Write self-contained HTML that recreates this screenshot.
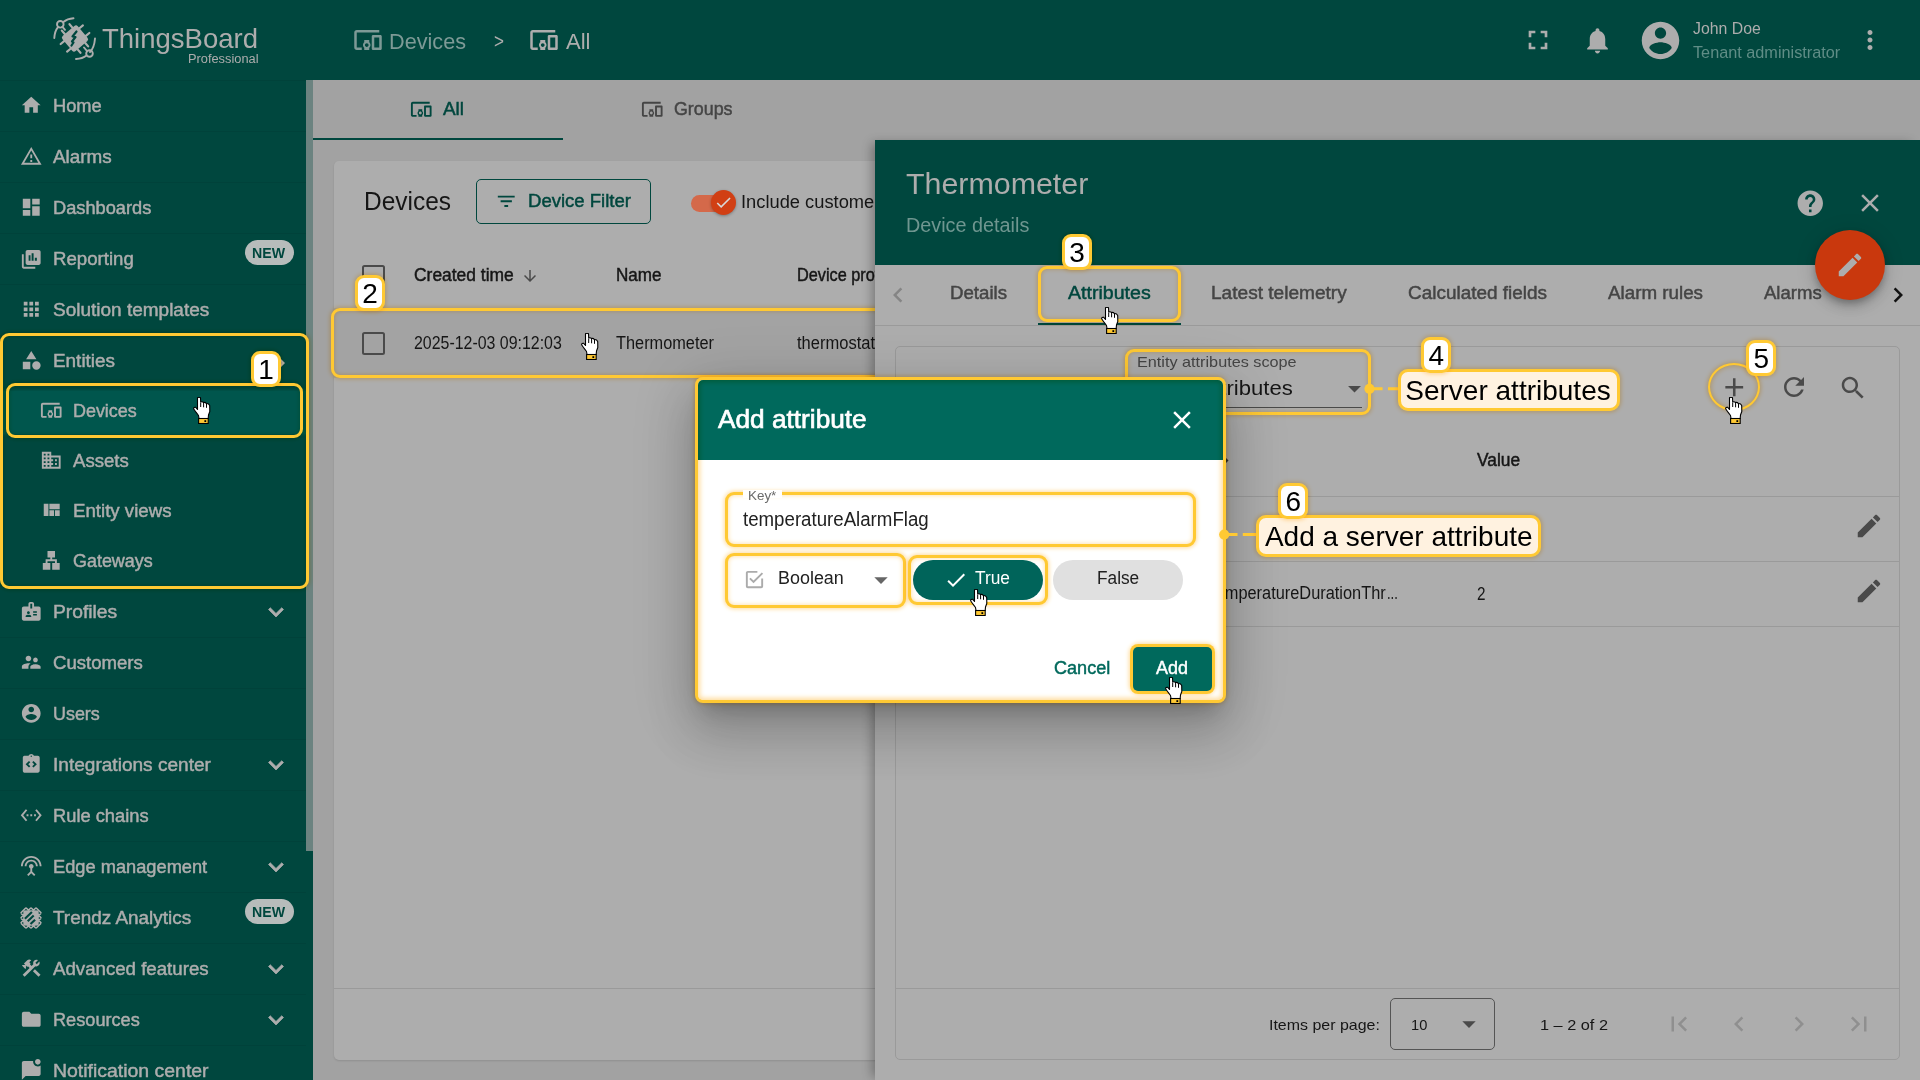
<!DOCTYPE html><html><head><meta charset="utf-8"><title>ThingsBoard</title><style>
html,body{margin:0;padding:0;}
body{width:1920px;height:1080px;overflow:hidden;position:relative;background:#a2a2a2;font-family:"Liberation Sans", sans-serif;}
#root{position:absolute;left:0;top:0;width:1920px;height:1080px;overflow:hidden;}
#root div,#root svg,#root span{position:absolute;box-sizing:border-box;}
.t{white-space:nowrap;display:block;}
.y{border:3px solid #ffc933;border-radius:9px;}
.g{border-radius:9px;box-shadow:0 0 4px 1px #ffdc9c,inset 0 0 5px 3px #ffdc9c;mix-blend-mode:multiply;}
.go{border-radius:9px;box-shadow:0 0 4px 1px #ffdc9c;mix-blend-mode:multiply;}
.nl{border:3px solid #ffc933;border-radius:9px;background:#fff;}
.tl{border:3px solid #ffc933;border-radius:10px;background:#fff2e0;}
</style></head><body><div id="root">
<div  style="left:0px;top:0px;width:1920px;height:80px;background:#00473e;"></div>
<div  style="left:0px;top:80px;width:313px;height:1000px;background:#00473e;"></div>
<div  style="left:306px;top:80px;width:7px;height:771px;background:#6b8380;"></div>
<div  style="left:0px;top:80.0px;width:306px;height:1px;background:#00423a;"></div>
<svg style="left:20.00px;top:94.25px;width:22.5px;height:22.5px;" viewBox="0 0 24 24"><path fill="#adadad"  d="M10 20v-6h4v6h5v-8h3L12 3 2 12h3v8z"/></svg>
<span class="t" id="t0" style="font-size:17.5px;line-height:17.5px;height:17.5px;color:#adadad;top:97.64px;-webkit-text-stroke:0.45px #adadad;left:52.5px;transform-origin:0 0;transform:scaleX(1.0442);">Home</span>
<div  style="left:0px;top:131.0px;width:306px;height:1px;background:#00423a;"></div>
<svg style="left:20.00px;top:145.25px;width:22.5px;height:22.5px;" viewBox="0 0 24 24"><path fill="#adadad"  d="M12 5.99L19.53 19H4.47L12 5.99M12 2L1 21h22L12 2zm1 14h-2v2h2v-2zm0-6h-2v4h2v-4z"/></svg>
<span class="t" id="t1" style="font-size:17.5px;line-height:17.5px;height:17.5px;color:#adadad;top:148.64px;-webkit-text-stroke:0.45px #adadad;left:52.5px;transform-origin:0 0;transform:scaleX(1.0789);">Alarms</span>
<div  style="left:0px;top:182.0px;width:306px;height:1px;background:#00423a;"></div>
<svg style="left:20.00px;top:196.25px;width:22.5px;height:22.5px;" viewBox="0 0 24 24"><path fill="#adadad"  d="M3 13h8V3H3v10zm0 8h8v-6H3v6zm10 0h8V11h-8v10zm0-18v6h8V3h-8z"/></svg>
<span class="t" id="t2" style="font-size:17.5px;line-height:17.5px;height:17.5px;color:#adadad;top:199.64px;-webkit-text-stroke:0.45px #adadad;left:52.5px;transform-origin:0 0;transform:scaleX(1.0411);">Dashboards</span>
<div  style="left:0px;top:233.0px;width:306px;height:1px;background:#00423a;"></div>
<svg style="left:20px;top:248.1px;width:22.5px;height:22.5px" viewBox="0 0 24 24"><path fill="#adadad" fill-rule="evenodd" d="M4 6.700H2V20c0 1.100.9 2 2 2h12.300v-2H4zM20 2H8c-1.100 0-2 .9-2 2v12c0 1.100.9 2 2 2h12c1.100 0 2-.9 2-2V4c0-1.100-.9-2-2-2zM9.200 7.700h2v5.900h-2zM12.400 5.600h2.100v8h-2.100zM15.800 10.300h2.200v3.300h-2.200z"/></svg>
<span class="t" id="t3" style="font-size:17.5px;line-height:17.5px;height:17.5px;color:#adadad;top:250.64px;-webkit-text-stroke:0.45px #adadad;left:52.5px;transform-origin:0 0;transform:scaleX(1.0640);">Reporting</span>
<div  style="left:244.5px;top:239.5px;width:49px;height:25px;background:#b7bcbb;border-radius:12.5px;"></div>
<span class="t" id="t4" style="font-size:15px;line-height:15px;height:15px;color:#00473e;top:245.20px;font-weight:700;left:252.3px;transform-origin:0 0;transform:scaleX(0.9429);">NEW</span>
<div  style="left:0px;top:284.0px;width:306px;height:1px;background:#00423a;"></div>
<svg style="left:20.00px;top:298.25px;width:22.5px;height:22.5px;" viewBox="0 0 24 24"><path fill="#adadad"  d="M4 8h4V4H4v4zm6 12h4v-4h-4v4zm-6 0h4v-4H4v4zm0-6h4v-4H4v4zm6 0h4v-4h-4v4zm6-10v4h4V4h-4zm-6 4h4V4h-4v4zm6 6h4v-4h-4v4zm0 6h4v-4h-4v4z"/></svg>
<span class="t" id="t5" style="font-size:17.5px;line-height:17.5px;height:17.5px;color:#adadad;top:301.64px;-webkit-text-stroke:0.45px #adadad;left:52.5px;transform-origin:0 0;transform:scaleX(1.0852);">Solution templates</span>
<div  style="left:0px;top:335.0px;width:306px;height:1px;background:#00423a;"></div>
<svg style="left:20.00px;top:349.25px;width:22.5px;height:22.5px;" viewBox="0 0 24 24"><path fill="#adadad"  d="M12 2l-5.5 9h11z M13 17.5a4.5 4.5 0 1 0 9 0a4.5 4.5 0 1 0 -9 0z M3 13.5h8v8H3z"/></svg>
<span class="t" id="t6" style="font-size:17.5px;line-height:17.5px;height:17.5px;color:#adadad;top:352.64px;-webkit-text-stroke:0.45px #adadad;left:52.5px;transform-origin:0 0;transform:scaleX(1.0803);">Entities</span>
<svg style="left:265.00px;top:347.90px;width:30px;height:30px;" viewBox="0 0 24 24"><path fill="#adadad"  d="M10 6L8.59 7.41 13.17 12l-4.58 4.59L10 18l6-6z"/></svg>
<div  style="left:0px;top:586.0px;width:306px;height:1px;background:#00423a;"></div>
<svg style="left:20.00px;top:600.25px;width:22.5px;height:22.5px;" viewBox="0 0 24 24"><path fill="#adadad"  d="M20 7h-5V4c0-1.1-.9-2-2-2h-2c-1.1 0-2 .9-2 2v3H4c-1.1 0-2 .9-2 2v11c0 1.1.9 2 2 2h16c1.1 0 2-.9 2-2V9c0-1.1-.9-2-2-2zM9 12c.83 0 1.5.67 1.5 1.5S9.83 15 9 15s-1.5-.67-1.5-1.5S8.17 12 9 12zm3 6H6v-.75c0-1 2-1.5 3-1.5s3 .5 3 1.5V18zm1-9h-2V4h2v5zm5 7.5h-4V15h4v1.5zm0-3h-4V12h4v1.5z"/></svg>
<span class="t" id="t7" style="font-size:17.5px;line-height:17.5px;height:17.5px;color:#adadad;top:603.64px;-webkit-text-stroke:0.45px #adadad;left:52.5px;transform-origin:0 0;transform:scaleX(1.1001);">Profiles</span>
<svg style="left:260.80px;top:597.00px;width:30px;height:30px;overflow:visible;" viewBox="0 0 24 24"><path fill="#adadad" stroke="#adadad" stroke-width="0.55" d="M16.59 8.59L12 13.17 7.41 8.59 6 10l6 6 6-6z"/></svg>
<div  style="left:0px;top:637.0px;width:306px;height:1px;background:#00423a;"></div>
<svg style="left:20.00px;top:651.25px;width:22.5px;height:22.5px;" viewBox="0 0 24 24"><path fill="#adadad"  d="M16.5 12c1.38 0 2.49-1.12 2.49-2.5S17.88 7 16.5 7C15.12 7 14 8.12 14 9.5s1.12 2.5 2.5 2.5zM9 11c1.66 0 2.99-1.34 2.99-3S10.66 5 9 5C7.34 5 6 6.34 6 8s1.34 3 3 3zm7.5 3c-1.83 0-5.5.92-5.5 2.75V19h11v-2.25c0-1.83-3.67-2.75-5.5-2.75zM9 13c-2.33 0-7 1.17-7 3.5V19h7v-2.25c0-.85.33-2.34 2.37-3.47C10.5 13.1 9.66 13 9 13z"/></svg>
<span class="t" id="t8" style="font-size:17.5px;line-height:17.5px;height:17.5px;color:#adadad;top:654.64px;-webkit-text-stroke:0.45px #adadad;left:52.5px;transform-origin:0 0;transform:scaleX(1.0613);">Customers</span>
<div  style="left:0px;top:688.0px;width:306px;height:1px;background:#00423a;"></div>
<svg style="left:20.00px;top:702.25px;width:22.5px;height:22.5px;" viewBox="0 0 24 24"><path fill="#adadad"  d="M12 2C6.48 2 2 6.48 2 12s4.48 10 10 10 10-4.48 10-10S17.52 2 12 2zm0 3c1.66 0 3 1.34 3 3s-1.34 3-3 3-3-1.34-3-3 1.34-3 3-3zm0 14.2c-2.5 0-4.71-1.28-6-3.22.03-1.99 4-3.08 6-3.08 1.99 0 5.97 1.09 6 3.08-1.29 1.94-3.5 3.22-6 3.22z"/></svg>
<span class="t" id="t9" style="font-size:17.5px;line-height:17.5px;height:17.5px;color:#adadad;top:705.64px;-webkit-text-stroke:0.45px #adadad;left:52.5px;transform-origin:0 0;transform:scaleX(1.0240);">Users</span>
<div  style="left:0px;top:739.0px;width:306px;height:1px;background:#00423a;"></div>
<svg style="left:20.00px;top:753.25px;width:22.5px;height:22.5px;" viewBox="0 0 24 24"><path fill="#adadad"  d="M19 3h-4.18C14.4 1.84 13.3 1 12 1s-2.4.84-2.82 2H5c-.14 0-.27.01-.4.04-.39.08-.74.28-1.01.55-.18.18-.33.4-.43.64-.1.23-.16.49-.16.77v14c0 .27.06.54.16.78s.25.45.43.64c.27.27.62.47 1.01.55.13.02.26.03.4.03h14c1.1 0 2-.9 2-2V5c0-1.1-.9-2-2-2zm-8 11.17l-1.41 1.42L6 12l3.59-3.59L11 9.83 8.83 12 11 14.17zm1-9.92c-.41 0-.75-.34-.75-.75s.34-.75.75-.75.75.34.75.75-.34.75-.75.75zm2.41 11.34L13 14.17 15.17 12 13 9.83l1.41-1.42L18 12l-3.59 3.59z"/></svg>
<span class="t" id="t10" style="font-size:17.5px;line-height:17.5px;height:17.5px;color:#adadad;top:756.64px;-webkit-text-stroke:0.45px #adadad;left:52.5px;transform-origin:0 0;transform:scaleX(1.0893);">Integrations center</span>
<svg style="left:260.80px;top:750.00px;width:30px;height:30px;overflow:visible;" viewBox="0 0 24 24"><path fill="#adadad" stroke="#adadad" stroke-width="0.55" d="M16.59 8.59L12 13.17 7.41 8.59 6 10l6 6 6-6z"/></svg>
<div  style="left:0px;top:790.0px;width:306px;height:1px;background:#00423a;"></div>
<svg style="left:20.00px;top:804.25px;width:22.5px;height:22.5px;" viewBox="0 0 24 24"><path fill="#adadad"  d="M7.77 6.76L6.23 5.48.82 12l5.41 6.52 1.54-1.28L3.42 12l4.35-5.24zM7 13h2v-2H7v2zm10-2h-2v2h2v-2zm-6 2h2v-2h-2v2zm6.77-7.52l-1.54 1.28L20.58 12l-4.35 5.24 1.54 1.28L23.18 12l-5.41-6.52z"/></svg>
<span class="t" id="t11" style="font-size:17.5px;line-height:17.5px;height:17.5px;color:#adadad;top:807.64px;-webkit-text-stroke:0.45px #adadad;left:52.5px;transform-origin:0 0;transform:scaleX(1.0453);">Rule chains</span>
<div  style="left:0px;top:841.0px;width:306px;height:1px;background:#00423a;"></div>
<svg style="left:20.00px;top:855.25px;width:22.5px;height:22.5px;" viewBox="0 0 24 24"><path fill="#adadad"  d="M12 5c-3.87 0-7 3.13-7 7h2c0-2.76 2.24-5 5-5s5 2.24 5 5h2c0-3.87-3.13-7-7-7zm1 9.29c.88-.39 1.5-1.26 1.5-2.29 0-1.38-1.12-2.5-2.5-2.5S9.5 10.62 9.5 12c0 1.02.62 1.9 1.5 2.29v3.3L7.59 21 9 22.41l3-3 3 3L16.41 21 13 17.59v-3.3zM12 1C5.93 1 1 5.93 1 12h2c0-4.97 4.03-9 9-9s9 4.03 9 9h2c0-6.07-4.93-11-11-11z"/></svg>
<span class="t" id="t12" style="font-size:17.5px;line-height:17.5px;height:17.5px;color:#adadad;top:858.64px;-webkit-text-stroke:0.45px #adadad;left:52.5px;transform-origin:0 0;transform:scaleX(1.0427);">Edge management</span>
<svg style="left:260.80px;top:852.00px;width:30px;height:30px;overflow:visible;" viewBox="0 0 24 24"><path fill="#adadad" stroke="#adadad" stroke-width="0.55" d="M16.59 8.59L12 13.17 7.41 8.59 6 10l6 6 6-6z"/></svg>
<div  style="left:0px;top:892.0px;width:306px;height:1px;background:#00423a;"></div>
<svg style="left:20px;top:907.0px;width:22px;height:22px" viewBox="0 0 22 22"><path d="M6.0 .7L.7 6.0M11.0 .7L.7 11.0M16.0 .7L.7 16.0M21.3 6.0L6.0 21.3M21.3 11.0L11.0 21.3M21.3 16.0L16.0 21.3M6.0 .7L21.3 16.0M11.0 .7L21.3 11.0M16.0 .7L21.3 6.0M.7 6.0L16.0 21.3M.7 11.0L11.0 21.3M.7 16.0L6.0 21.3" stroke="#adadad" stroke-width="1.600" fill="none"/><path d="M3.400 3.400L8.500 3.200L13.500 3.200L18.600 3.400L18.800 8.500L18.800 13.500L18.600 18.600L13.500 18.800L8.500 18.800L3.400 18.600L3.200 13.500L3.200 8.500z" fill="#adadad"/><path d="M4.900 11.700L11.900 4.900M7.700 14.300L13.700 8.400M10.500 17.100L15.100 12.700" stroke="#00473e" stroke-width="2.100" fill="none"/></svg>
<span class="t" id="t13" style="font-size:17.5px;line-height:17.5px;height:17.5px;color:#adadad;top:909.64px;-webkit-text-stroke:0.45px #adadad;left:52.5px;transform-origin:0 0;transform:scaleX(1.0818);">Trendz Analytics</span>
<div  style="left:244.5px;top:898.5px;width:49px;height:25px;background:#b7bcbb;border-radius:12.5px;"></div>
<span class="t" id="t14" style="font-size:15px;line-height:15px;height:15px;color:#00473e;top:904.20px;font-weight:700;left:252.3px;transform-origin:0 0;transform:scaleX(0.9429);">NEW</span>
<div  style="left:0px;top:943.0px;width:306px;height:1px;background:#00423a;"></div>
<svg style="left:20.00px;top:957.25px;width:22.5px;height:22.5px;" viewBox="0 0 24 24"><path fill="#adadad"  d="M13.783 15.172l2.121-2.121 5.996 5.996-2.121 2.121zM17.5 10c1.93 0 3.5-1.57 3.5-3.5 0-.58-.16-1.12-.41-1.6l-2.7 2.7-1.49-1.49 2.7-2.7c-.48-.25-1.02-.41-1.6-.41C15.57 3 14 4.57 14 6.5c0 .41.08.8.21 1.16l-1.85 1.85-1.78-1.78.71-.71-1.41-1.41L12 3.49c-1.17-1.17-3.07-1.17-4.24 0L4.22 7.03l1.41 1.41H2.81l-.71.71 3.54 3.54.71-.71V9.15l1.41 1.41.71-.71 1.78 1.78-7.41 7.41 2.12 2.12L16.34 9.79c.36.13.75.21 1.16.21z"/></svg>
<span class="t" id="t15" style="font-size:17.5px;line-height:17.5px;height:17.5px;color:#adadad;top:960.64px;-webkit-text-stroke:0.45px #adadad;left:52.5px;transform-origin:0 0;transform:scaleX(1.0662);">Advanced features</span>
<svg style="left:260.80px;top:954.00px;width:30px;height:30px;overflow:visible;" viewBox="0 0 24 24"><path fill="#adadad" stroke="#adadad" stroke-width="0.55" d="M16.59 8.59L12 13.17 7.41 8.59 6 10l6 6 6-6z"/></svg>
<div  style="left:0px;top:994.0px;width:306px;height:1px;background:#00423a;"></div>
<svg style="left:20.00px;top:1008.25px;width:22.5px;height:22.5px;" viewBox="0 0 24 24"><path fill="#adadad"  d="M10 4H4c-1.1 0-1.99.9-1.99 2L2 18c0 1.1.9 2 2 2h16c1.1 0 2-.9 2-2V8c0-1.1-.9-2-2-2h-8l-2-2z"/></svg>
<span class="t" id="t16" style="font-size:17.5px;line-height:17.5px;height:17.5px;color:#adadad;top:1011.64px;-webkit-text-stroke:0.45px #adadad;left:52.5px;transform-origin:0 0;transform:scaleX(1.0376);">Resources</span>
<svg style="left:260.80px;top:1005.00px;width:30px;height:30px;overflow:visible;" viewBox="0 0 24 24"><path fill="#adadad" stroke="#adadad" stroke-width="0.55" d="M16.59 8.59L12 13.17 7.41 8.59 6 10l6 6 6-6z"/></svg>
<div  style="left:0px;top:1045.0px;width:306px;height:1px;background:#00423a;"></div>
<svg style="left:20.00px;top:1059.25px;width:22.5px;height:22.5px;" viewBox="0 0 24 24"><path fill="#adadad"  d="M22 7v9c0 1.1-.9 2-2 2H6l-4 4V4c0-1.1.9-2 2-2h10.1c-.1.32-.1.66-.1 1 0 2.76 2.24 5 5 5 1.13 0 2.16-.37 3-1zm-6-4c0 1.66 1.34 3 3 3s3-1.34 3-3-1.34-3-3-3-3 1.34-3 3z"/></svg>
<span class="t" id="t17" style="font-size:17.5px;line-height:17.5px;height:17.5px;color:#adadad;top:1062.64px;-webkit-text-stroke:0.45px #adadad;left:52.5px;transform-origin:0 0;transform:scaleX(1.1108);">Notification center</span>
<div  style="left:0px;top:390.5px;width:306px;height:43px;background:#00564d;box-shadow:0 0 2px 1px #00564d;"></div>
<svg style="left:40.25px;top:399.25px;width:22.5px;height:22.5px;" viewBox="0 0 24 24"><path fill="#adadad"  d="M3 6h18V4H3c-1.1 0-2 .9-2 2v12c0 1.1.9 2 2 2h4v-2H3V6zm10 6H9v1.78c-.61.55-1 1.33-1 2.22s.39 1.67 1 2.22V20h4v-1.78c.61-.55 1-1.34 1-2.22s-.39-1.67-1-2.22V12zm-2 5.5c-.83 0-1.5-.67-1.5-1.5s.67-1.5 1.5-1.5 1.5.67 1.5 1.5-.67 1.5-1.5 1.5zM22 8h-6c-.5 0-1 .5-1 1v10c0 .5.5 1 1 1h6c.5 0 1-.5 1-1V9c0-.5-.5-1-1-1zm-1 10h-4v-8h4v8z"/></svg>
<span class="t" id="t18" style="font-size:17.5px;line-height:17.5px;height:17.5px;color:#adadad;top:402.79px;-webkit-text-stroke:0.45px #adadad;left:73px;transform-origin:0 0;transform:scaleX(1.0241);">Devices</span>
<svg style="left:40.25px;top:449.25px;width:22.5px;height:22.5px;" viewBox="0 0 24 24"><path fill="#adadad"  d="M12 7V3H2v18h20V7H12zM6 19H4v-2h2v2zm0-4H4v-2h2v2zm0-4H4V9h2v2zm0-4H4V5h2v2zm4 12H8v-2h2v2zm0-4H8v-2h2v2zm0-4H8V9h2v2zm0-4H8V5h2v2zm10 12h-8v-2h2v-2h-2v-2h2v-2h-2V9h8v10zm-2-8h-2v2h2v-2zm0 4h-2v2h2v-2z"/></svg>
<span class="t" id="t19" style="font-size:17.5px;line-height:17.5px;height:17.5px;color:#adadad;top:452.79px;-webkit-text-stroke:0.45px #adadad;left:73px;transform-origin:0 0;transform:scaleX(1.0613);">Assets</span>
<svg style="left:40.25px;top:499.25px;width:22.5px;height:22.5px;" viewBox="0 0 24 24"><path fill="#adadad"  d="M10 18h5v-6h-5v6zm-6 0h5V5H4v13zm12 0h5v-6h-5v6zM10 5v6h11V5H10z"/></svg>
<span class="t" id="t20" style="font-size:17.5px;line-height:17.5px;height:17.5px;color:#adadad;top:502.79px;-webkit-text-stroke:0.45px #adadad;left:73px;transform-origin:0 0;transform:scaleX(1.0661);">Entity views</span>
<svg style="left:40.25px;top:549.25px;width:22.5px;height:22.5px;" viewBox="0 0 24 24"><path fill="#adadad"  d="M13 22h8v-7h-3v-4h-5V9h3V2H8v7h3v2H6v4H3v7h8v-7H8v-2h8v2h-3z"/></svg>
<span class="t" id="t21" style="font-size:17.5px;line-height:17.5px;height:17.5px;color:#adadad;top:552.79px;-webkit-text-stroke:0.45px #adadad;left:73px;transform-origin:0 0;transform:scaleX(1.0243);">Gateways</span>
<svg style="left:52px;top:16px;width:46px;height:46px" viewBox="0 0 46 46">
<g fill="none" stroke="#adadad" stroke-width="1.900" stroke-linecap="round">
<path d="M2.300 22C2.600 17 4 13.500 5.800 11.300"/><path d="M11.300 6C14 3.800 17.500 2.600 21.500 2.300"/>
<circle cx="8.300" cy="8.300" r="3.300"/>
<path d="M43 22.500C42.500 29 40.500 33.500 38 36"/><path d="M34.500 39.500C32 41.500 28.500 42.800 24 43"/>
<circle cx="37.500" cy="37.500" r="3.300"/>
<path d="M10.500 10.800l2.500 3M35 35l-3-3.500"/>
</g>
<g transform="translate(23 22.500) rotate(-40)">
<rect x="-10" y="-10" width="20" height="20" rx="2.500" fill="#adadad"/>
<g stroke="#adadad" stroke-width="2.200" stroke-linecap="round">
<path d="M-5 -10v-4.500M5 -10v-4.500M-5 10v4.500M5 10v4.500M-10 -5h-4.500M-10 5h-4.500M10 -5h4.500M10 5h4.500"/></g>
</g>
<path d="M24.500 15.500l-4 5 3 .5-3.500 4.500 1.500 1-2 3" fill="none" stroke="#00473e" stroke-width="2.200" stroke-linejoin="round" stroke-linecap="round"/>
</svg>
<span class="t" id="t22" style="font-size:28px;line-height:28px;height:28px;color:#adadad;top:24.50px;left:101.9px;transform-origin:0 0;transform:scaleX(0.9826);">ThingsBoard</span>
<span class="t" id="t23" style="font-size:12.5px;line-height:12.5px;height:12.5px;color:#adadad;top:52.87px;left:187.5px;transform-origin:0 0;transform:scaleX(1.0248);">Professional</span>
<svg style="left:352.50px;top:25.20px;width:30px;height:30px;" viewBox="0 0 24 24"><path fill="#7d9a96"  d="M3 6h18V4H3c-1.1 0-2 .9-2 2v12c0 1.1.9 2 2 2h4v-2H3V6zm10 6H9v1.78c-.61.55-1 1.33-1 2.22s.39 1.67 1 2.22V20h4v-1.78c.61-.55 1-1.34 1-2.22s-.39-1.67-1-2.22V12zm-2 5.5c-.83 0-1.5-.67-1.5-1.5s.67-1.5 1.5-1.5 1.5.67 1.5 1.5-.67 1.5-1.5 1.5zM22 8h-6c-.5 0-1 .5-1 1v10c0 .5.5 1 1 1h6c.5 0 1-.5 1-1V9c0-.5-.5-1-1-1zm-1 10h-4v-8h4v8z"/></svg>
<span class="t" id="t24" style="font-size:22.5px;line-height:22.5px;height:22.5px;color:#7d9a96;top:31.15px;left:389px;transform-origin:0 0;transform:scaleX(0.9621);">Devices</span>
<span class="t" id="t25" style="font-size:20px;line-height:20px;height:20px;color:#adadad;top:31.27px;left:494px;transform-origin:0 0;transform:scaleX(0.8556);">&gt;</span>
<svg style="left:528.70px;top:25.20px;width:30px;height:30px;" viewBox="0 0 24 24"><path fill="#adadad"  d="M3 6h18V4H3c-1.1 0-2 .9-2 2v12c0 1.1.9 2 2 2h4v-2H3V6zm10 6H9v1.78c-.61.55-1 1.33-1 2.22s.39 1.67 1 2.22V20h4v-1.78c.61-.55 1-1.34 1-2.22s-.39-1.67-1-2.22V12zm-2 5.5c-.83 0-1.5-.67-1.5-1.5s.67-1.5 1.5-1.5 1.5.67 1.5 1.5-.67 1.5-1.5 1.5zM22 8h-6c-.5 0-1 .5-1 1v10c0 .5.5 1 1 1h6c.5 0 1-.5 1-1V9c0-.5-.5-1-1-1zm-1 10h-4v-8h4v8z"/></svg>
<span class="t" id="t26" style="font-size:22.5px;line-height:22.5px;height:22.5px;color:#adadad;top:31.15px;left:565.5px;transform-origin:0 0;transform:scaleX(0.9794);">All</span>
<svg style="left:1521.90px;top:24.30px;width:32px;height:32px;" viewBox="0 0 24 24"><path fill="#adadad"  d="M7 14H5v5h5v-2H7v-3zm-2-4h2V7h3V5H5v5zm12 7h-3v2h5v-5h-2v3zM14 5v2h3v3h2V5h-5z"/></svg>
<svg style="left:1581.80px;top:24.90px;width:31px;height:31px;" viewBox="0 0 24 24"><path fill="#adadad"  d="M12 22c1.1 0 2-.9 2-2h-4c0 1.1.89 2 2 2zm6-6v-5c0-3.07-1.64-5.64-4.5-6.32V4c0-.83-.67-1.5-1.5-1.5s-1.5.67-1.5 1.5v.68C7.63 5.36 6 7.92 6 11v5l-2 2v1h16v-1l-2-2z"/></svg>
<svg style="left:1637.50px;top:17.70px;width:45px;height:45px;" viewBox="0 0 24 24"><path fill="#adadad"  d="M12 2C6.48 2 2 6.48 2 12s4.48 10 10 10 10-4.48 10-10S17.52 2 12 2zm0 3c1.66 0 3 1.34 3 3s-1.34 3-3 3-3-1.34-3-3 1.34-3 3-3zm0 14.2c-2.5 0-4.71-1.28-6-3.22.03-1.99 4-3.08 6-3.08 1.99 0 5.97 1.09 6 3.08-1.29 1.94-3.5 3.22-6 3.22z"/></svg>
<span class="t" id="t27" style="font-size:16.25px;line-height:16.25px;height:16.25px;color:#adadad;top:19.74px;left:1692.5px;transform-origin:0 0;transform:scaleX(0.9747);">John Doe</span>
<span class="t" id="t28" style="font-size:16.25px;line-height:16.25px;height:16.25px;color:#5f8d86;top:43.84px;left:1692.5px;transform-origin:0 0;transform:scaleX(0.9998);">Tenant administrator</span>
<svg style="left:1855.00px;top:25.00px;width:30px;height:30px;" viewBox="0 0 24 24"><path fill="#adadad"  d="M12 8c1.1 0 2-.9 2-2s-.9-2-2-2-2 .9-2 2 .9 2 2 2zm0 2c-1.1 0-2 .9-2 2s.9 2 2 2 2-.9 2-2-.9-2-2-2zm0 6c-1.1 0-2 .9-2 2s.9 2 2 2 2-.9 2-2-.9-2-2-2z"/></svg>
<svg style="left:410.25px;top:97.75px;width:22.5px;height:22.5px;" viewBox="0 0 24 24"><path fill="#00473e"  d="M3 6h18V4H3c-1.1 0-2 .9-2 2v12c0 1.1.9 2 2 2h4v-2H3V6zm10 6H9v1.78c-.61.55-1 1.33-1 2.22s.39 1.67 1 2.22V20h4v-1.78c.61-.55 1-1.34 1-2.22s-.39-1.67-1-2.22V12zm-2 5.5c-.83 0-1.5-.67-1.5-1.5s.67-1.5 1.5-1.5 1.5.67 1.5 1.5-.67 1.5-1.5 1.5zM22 8h-6c-.5 0-1 .5-1 1v10c0 .5.5 1 1 1h6c.5 0 1-.5 1-1V9c0-.5-.5-1-1-1zm-1 10h-4v-8h4v8z"/></svg>
<span class="t" id="t29" style="font-size:17.5px;line-height:17.5px;height:17.5px;color:#00473e;top:101.19px;-webkit-text-stroke:0.45px #00473e;left:443px;transform-origin:0 0;transform:scaleX(1.0795);">All</span>
<div  style="left:313px;top:137.5px;width:250px;height:2.5px;background:#00473e;"></div>
<svg style="left:641.25px;top:97.75px;width:22.5px;height:22.5px;" viewBox="0 0 24 24"><path fill="#454545"  d="M3 6h18V4H3c-1.1 0-2 .9-2 2v12c0 1.1.9 2 2 2h4v-2H3V6zm10 6H9v1.78c-.61.55-1 1.33-1 2.22s.39 1.67 1 2.22V20h4v-1.78c.61-.55 1-1.34 1-2.22s-.39-1.67-1-2.22V12zm-2 5.5c-.83 0-1.5-.67-1.5-1.5s.67-1.5 1.5-1.5 1.5.67 1.5 1.5-.67 1.5-1.5 1.5zM22 8h-6c-.5 0-1 .5-1 1v10c0 .5.5 1 1 1h6c.5 0 1-.5 1-1V9c0-.5-.5-1-1-1zm-1 10h-4v-8h4v8z"/></svg>
<span class="t" id="t30" style="font-size:17.5px;line-height:17.5px;height:17.5px;color:#454545;top:101.19px;-webkit-text-stroke:0.45px #454545;left:674px;transform-origin:0 0;transform:scaleX(1.0193);">Groups</span>
<div  style="left:334px;top:161px;width:1565px;height:898.5px;background:#adadad;border-radius:5px;box-shadow:0 1px 2px rgba(0,0,0,.12);"></div>
<span class="t" id="t31" style="font-size:25px;line-height:25px;height:25px;color:#161616;top:189.04px;left:364px;transform-origin:0 0;transform:scaleX(0.9784);">Devices</span>
<div  style="left:476px;top:179px;width:175px;height:44.5px;border:1.250px solid #00473e;border-radius:5px;"></div>
<svg style="left:495.05px;top:190.25px;width:22.5px;height:22.5px;" viewBox="0 0 24 24"><path fill="#00473e"  d="M10 18h4v-2h-4v2zM3 6v2h18V6H3zm3 7h12v-2H6v2z"/></svg>
<span class="t" id="t32" style="font-size:17.5px;line-height:17.5px;height:17.5px;color:#00473e;top:193.49px;-webkit-text-stroke:0.45px #00473e;left:528px;transform-origin:0 0;transform:scaleX(1.0591);">Device Filter</span>
<div  style="left:691px;top:194.5px;width:44px;height:17px;background:#d4694a;border-radius:8.500px;"></div>
<div  style="left:710.5px;top:190px;width:25px;height:25px;background:#d13f14;border-radius:50%;box-shadow:0 1px 3px rgba(0,0,0,.3);"></div>
<svg style="left:713.50px;top:193.20px;width:19px;height:19px;" viewBox="0 0 24 24"><path fill="#d9d9d9"  d="M9 16.17L4.83 12l-1.42 1.41L9 19 21 7l-1.41-1.41z"/></svg>
<span class="t" id="t33" style="font-size:17.5px;line-height:17.5px;height:17.5px;color:#161616;top:194.19px;left:741px;transform-origin:0 0;transform:scaleX(1.0460);">Include customer entities</span>
<div  style="left:362px;top:264.8px;width:22.5px;height:22.5px;border:2.500px solid #4a4a4a;border-radius:2.500px;"></div>
<span class="t" id="t34" style="font-size:17.5px;line-height:17.5px;height:17.5px;color:#161616;top:266.69px;-webkit-text-stroke:0.45px #161616;left:414px;transform-origin:0 0;transform:scaleX(0.9951);">Created time</span>
<svg style="left:520.80px;top:266.50px;width:18px;height:18px;" viewBox="0 0 24 24"><path fill="#4a4a4a"  d="M20 12l-1.41-1.41L13 16.17V4h-2v12.17l-5.58-5.59L4 12l8 8 8-8z"/></svg>
<span class="t" id="t35" style="font-size:17.5px;line-height:17.5px;height:17.5px;color:#161616;top:266.69px;-webkit-text-stroke:0.45px #161616;left:616.3px;transform-origin:0 0;transform:scaleX(0.9746);">Name</span>
<span class="t" id="t36" style="font-size:17.5px;line-height:17.5px;height:17.5px;color:#161616;top:266.69px;-webkit-text-stroke:0.45px #161616;left:796.5px;transform-origin:0 0;transform:scaleX(0.9300);">Device profile</span>
<div  style="left:334px;top:308px;width:1565px;height:70px;background:#a3a3a3;"></div>
<div  style="left:362px;top:332px;width:22.5px;height:22.5px;border:2.500px solid #4a4a4a;border-radius:2.500px;"></div>
<span class="t" id="t37" style="font-size:17.5px;line-height:17.5px;height:17.5px;color:#161616;top:335.19px;left:414px;transform-origin:0 0;transform:scaleX(0.9095);">2025-12-03 09:12:03</span>
<span class="t" id="t38" style="font-size:17.5px;line-height:17.5px;height:17.5px;color:#161616;top:335.19px;left:616.3px;transform-origin:0 0;transform:scaleX(0.9331);">Thermometer</span>
<span class="t" id="t39" style="font-size:17.5px;line-height:17.5px;height:17.5px;color:#161616;top:335.19px;left:796.5px;transform-origin:0 0;transform:scaleX(0.9433);">thermostat</span>
<div  style="left:334px;top:988px;width:1565px;height:1.25px;background:#9a9a9a;"></div>
<div class="g" style="left:0px;top:333px;width:309.2px;height:256px;"></div>
<div class="y" style="left:0px;top:333px;width:309.2px;height:256px;"></div>
<div class="g" style="left:5.8px;top:382.8px;width:297.6px;height:55.5px;"></div>
<div class="y" style="left:5.8px;top:382.8px;width:297.6px;height:55.5px;"></div>
<div class="g" style="left:330.5px;top:307.5px;width:1571px;height:70.5px;"></div>
<div class="y" style="left:330.5px;top:307.5px;width:1571px;height:70.5px;"></div>
<div class="go" style="left:251px;top:351px;width:30px;height:36px;"></div><div class="nl" style="left:251px;top:351px;width:30px;height:36px;"></div>
<span class="t" id="t40" style="font-size:28px;line-height:28px;height:28px;color:#000;top:356.00px;left:258.2px;transform-origin:0 0;transform:scaleX(1.0000);">1</span>
<div class="go" style="left:355px;top:275px;width:30px;height:36px;"></div><div class="nl" style="left:355px;top:275px;width:30px;height:36px;"></div>
<span class="t" id="t41" style="font-size:28px;line-height:28px;height:28px;color:#000;top:280.00px;left:362.2px;transform-origin:0 0;transform:scaleX(1.0000);">2</span>
<svg style="left:192.5px;top:397px;width:18px;height:27px" viewBox="0 0 18 27"><path d="M4.500 .7Q6 -.3 7.500 .7L7.700 5Q9.300 4.200 10.600 5.500Q12.200 5 13.500 6.600Q15.600 6.300 16.700 8.500L16.800 14.500L15.500 18L15.200 21.500H6L5.500 18.500L3 15.200L.6 11.800Q.8 10 2.500 10.200L4.500 12.500Z" fill="#fff" stroke="#000" stroke-width="1.100" stroke-linejoin="round"/><path d="M7.700 5.500V10M10.600 6V10.300M13.500 7V10.800" stroke="#000" stroke-width="1" fill="none"/><rect x="5.600" y="21.500" width="9.600" height="5" fill="#ffc933" stroke="#000" stroke-width="1.100"/><rect x="11.400" y="23.200" width="1.800" height="1.800" fill="#000"/></svg>
<svg style="left:581px;top:332.5px;width:18px;height:27px" viewBox="0 0 18 27"><path d="M4.500 .7Q6 -.3 7.500 .7L7.700 5Q9.300 4.200 10.600 5.500Q12.200 5 13.500 6.600Q15.600 6.300 16.700 8.500L16.800 14.500L15.500 18L15.200 21.500H6L5.500 18.500L3 15.200L.6 11.800Q.8 10 2.500 10.200L4.500 12.500Z" fill="#fff" stroke="#000" stroke-width="1.100" stroke-linejoin="round"/><path d="M7.700 5.500V10M10.600 6V10.300M13.500 7V10.800" stroke="#000" stroke-width="1" fill="none"/><rect x="5.600" y="21.500" width="9.600" height="5" fill="#ffc933" stroke="#000" stroke-width="1.100"/><rect x="11.400" y="23.200" width="1.800" height="1.800" fill="#000"/></svg>
<div  style="left:875px;top:140px;width:1045px;height:940px;background:#adadad;box-shadow:-6px 0 10px -3px rgba(0,0,0,.3);"></div>
<div  style="left:875px;top:140px;width:1045px;height:125px;background:#00473e;"></div>
<span class="t" id="t42" style="font-size:30px;line-height:30px;height:30px;color:#adadad;top:168.60px;left:905.7px;transform-origin:0 0;transform:scaleX(1.0125);">Thermometer</span>
<span class="t" id="t43" style="font-size:20px;line-height:20px;height:20px;color:#6f9690;top:215.47px;left:905.7px;transform-origin:0 0;transform:scaleX(0.9902);">Device details</span>
<svg style="left:1795.15px;top:187.75px;width:30.5px;height:30.5px;" viewBox="0 0 24 24"><path fill="#adadad"  d="M12 2C6.48 2 2 6.48 2 12s4.48 10 10 10 10-4.48 10-10S17.52 2 12 2zm1 17h-2v-2h2v2zm2.07-7.75l-.9.92C13.45 12.9 13 13.5 13 15h-2v-.5c0-1.1.45-2.1 1.17-2.83l1.24-1.26c.37-.36.59-.86.59-1.41 0-1.1-.9-2-2-2s-2 .9-2 2H8c0-2.21 1.79-4 4-4s4 1.79 4 4c0 .88-.36 1.68-.93 2.25z"/></svg>
<svg style="left:1855.00px;top:188.00px;width:30px;height:30px;" viewBox="0 0 24 24"><path fill="#adadad"  d="M19 6.41L17.59 5 12 10.59 6.41 5 5 6.41 10.59 12 5 17.59 6.41 19 12 13.41 17.59 19 19 17.59 13.41 12z"/></svg>
<div  style="left:875px;top:324.5px;width:1045px;height:1.25px;background:#9a9a9a;"></div>
<svg style="left:882.50px;top:280.00px;width:30px;height:30px;" viewBox="0 0 24 24"><path fill="#858585"  d="M15.41 7.41L14 6l-6 6 6 6 1.41-1.41L10.83 12z"/></svg>
<svg style="left:1882.50px;top:280.00px;width:30px;height:30px;" viewBox="0 0 24 24"><path fill="#111"  d="M10 6L8.59 7.41 13.17 12l-4.58 4.59L10 18l6-6z"/></svg>
<span class="t" id="t44" style="font-size:17.5px;line-height:17.5px;height:17.5px;color:#454545;top:285.39px;-webkit-text-stroke:0.45px #454545;left:950px;transform-origin:0 0;transform:scaleX(1.0654);">Details</span>
<span class="t" id="t45" style="font-size:17.5px;line-height:17.5px;height:17.5px;color:#00473e;top:285.39px;-webkit-text-stroke:0.45px #00473e;left:1068px;transform-origin:0 0;transform:scaleX(1.1185);">Attributes</span>
<span class="t" id="t46" style="font-size:17.5px;line-height:17.5px;height:17.5px;color:#454545;top:285.39px;-webkit-text-stroke:0.45px #454545;left:1211px;transform-origin:0 0;transform:scaleX(1.0900);">Latest telemetry</span>
<span class="t" id="t47" style="font-size:17.5px;line-height:17.5px;height:17.5px;color:#454545;top:285.39px;-webkit-text-stroke:0.45px #454545;left:1407.7px;transform-origin:0 0;transform:scaleX(1.0825);">Calculated fields</span>
<span class="t" id="t48" style="font-size:17.5px;line-height:17.5px;height:17.5px;color:#454545;top:285.39px;-webkit-text-stroke:0.45px #454545;left:1607.7px;transform-origin:0 0;transform:scaleX(1.0734);">Alarm rules</span>
<span class="t" id="t49" style="font-size:17.5px;line-height:17.5px;height:17.5px;color:#454545;top:285.39px;-webkit-text-stroke:0.45px #454545;left:1764px;transform-origin:0 0;transform:scaleX(1.0596);">Alarms</span>
<div  style="left:1038px;top:322.5px;width:142.7px;height:2.5px;background:#00473e;"></div>
<div  style="left:1815px;top:229.8px;width:70px;height:70px;background:#c9380d;border-radius:50%;box-shadow:0 4px 6px -1px rgba(0,0,0,.2),0 7px 12px 0 rgba(0,0,0,.14),0 2px 22px 0 rgba(0,0,0,.12);"></div>
<svg style="left:1835.00px;top:249.80px;width:30px;height:30px;" viewBox="0 0 24 24"><path fill="#adadad"  d="M3 17.25V21h3.75L17.81 9.94l-3.75-3.75L3 17.25zM20.71 7.04c.39-.39.39-1.02 0-1.41l-2.34-2.34c-.39-.39-1.02-.39-1.41 0l-1.83 1.83 3.75 3.75 1.83-1.83z"/></svg>
<div  style="left:895.3px;top:346px;width:1004.4px;height:713.5px;border:1.250px solid #9a9a9a;border-radius:5px;"></div>
<span class="t" id="t50" style="font-size:15px;line-height:15px;height:15px;color:#454545;top:354.30px;left:1137px;transform-origin:0 0;transform:scaleX(1.0815);">Entity attributes scope</span>
<span class="t" id="t51" style="font-size:20px;line-height:20px;height:20px;color:#161616;top:378.27px;right:627.3px;transform-origin:100% 0;transform:scaleX(1.1050);">Server attributes</span>
<svg style="left:1339.30px;top:372.80px;width:31px;height:31px;" viewBox="0 0 24 24"><path fill="#4a4a4a"  d="M7 10l5 5 5-5z"/></svg>
<div  style="left:1137px;top:407px;width:224.8px;height:1.3px;background:#4a4a4a;"></div>
<svg style="left:1226px;top:457.500px;width:3px;height:5px" viewBox="0 0 3 5"><path d="M0 0L2.500 2.500L0 5z" fill="#333"/></svg>
<svg style="left:1718.95px;top:371.65px;width:30.5px;height:30.5px;" viewBox="0 0 24 24"><path fill="#4a4a4a"  d="M19 13h-6v6h-2v-6H5v-2h6V5h2v6h6v2z"/></svg>
<svg style="left:1779.00px;top:371.90px;width:30px;height:30px;" viewBox="0 0 24 24"><path fill="#4a4a4a"  d="M17.65 6.35C16.2 4.9 14.21 4 12 4c-4.42 0-7.99 3.58-7.99 8s3.57 8 7.99 8c3.73 0 6.84-2.55 7.73-6h-2.08c-.82 2.33-3.04 4-5.65 4-3.31 0-6-2.69-6-6s2.690-6 6-6c1.66 0 3.14.69 4.22 1.78L13 11h7V4l-2.35 2.35z"/></svg>
<svg style="left:1838.30px;top:372.80px;width:30px;height:30px;" viewBox="0 0 24 24"><path fill="#4a4a4a"  d="M15.5 14h-.79l-.28-.27C15.41 12.59 16 11.11 16 9.5 16 5.91 13.09 3 9.5 3S3 5.91 3 9.5 5.91 16 9.5 16c1.61 0 3.09-.59 4.23-1.57l.27.28v.79l5 4.99L20.49 19l-4.99-5zm-6 0C7.01 14 5 11.99 5 9.5S7.01 5 9.5 5 14 7.01 14 9.5 11.99 14 9.5 14z"/></svg>
<span class="t" id="t52" style="font-size:17.5px;line-height:17.5px;height:17.5px;color:#161616;top:451.89px;-webkit-text-stroke:0.45px #161616;left:1477.3px;transform-origin:0 0;transform:scaleX(0.9915);">Value</span>
<div  style="left:896px;top:496px;width:1003px;height:1.25px;background:#9a9a9a;"></div>
<div  style="left:896px;top:561px;width:1003px;height:1.25px;background:#9a9a9a;"></div>
<div  style="left:896px;top:626px;width:1003px;height:1.25px;background:#9a9a9a;"></div>
<div  style="left:896px;top:988px;width:1003px;height:1.25px;background:#9a9a9a;"></div>
<svg style="left:1853.70px;top:511.10px;width:30px;height:30px;" viewBox="0 0 24 24"><path fill="#4a4a4a"  d="M3 17.25V21h3.75L17.81 9.94l-3.75-3.75L3 17.25zM20.71 7.04c.39-.39.39-1.02 0-1.41l-2.34-2.34c-.39-.39-1.02-.39-1.41 0l-1.83 1.83 3.75 3.75 1.83-1.83z"/></svg>
<svg style="left:1853.70px;top:575.70px;width:30px;height:30px;" viewBox="0 0 24 24"><path fill="#4a4a4a"  d="M3 17.25V21h3.75L17.81 9.94l-3.75-3.75L3 17.25zM20.71 7.04c.39-.39.39-1.02 0-1.41l-2.34-2.34c-.39-.39-1.02-.39-1.41 0l-1.83 1.83 3.75 3.75 1.83-1.83z"/></svg>
<span class="t" id="t53" style="font-size:17.5px;line-height:17.5px;height:17.5px;color:#161616;top:585.49px;right:533.8px;transform-origin:100% 0;transform:scaleX(0.9350);">temperatureDurationThr</span>
<span class="t" id="t54" style="font-size:17.5px;line-height:17.5px;height:17.5px;color:#161616;top:585.49px;left:1386.8px;transform-origin:0 0;transform:scaleX(0.7400);">...</span>
<span class="t" id="t55" style="font-size:17.5px;line-height:17.5px;height:17.5px;color:#161616;top:585.69px;left:1477.2px;transform-origin:0 0;transform:scaleX(0.8732);">2</span>
<span class="t" id="t56" style="font-size:15px;line-height:15px;height:15px;color:#161616;top:1017.30px;left:1269px;transform-origin:0 0;transform:scaleX(1.0639);">Items per page:</span>
<div  style="left:1390.2px;top:998.3px;width:104.8px;height:51.3px;border:1.250px solid #555;border-radius:5px;"></div>
<span class="t" id="t57" style="font-size:15px;line-height:15px;height:15px;color:#161616;top:1017.30px;left:1410.7px;transform-origin:0 0;transform:scaleX(0.9768);">10</span>
<svg style="left:1452.80px;top:1008.30px;width:32px;height:32px;" viewBox="0 0 24 24"><path fill="#4a4a4a"  d="M7 10l5 5 5-5z"/></svg>
<span class="t" id="t58" style="font-size:15px;line-height:15px;height:15px;color:#161616;top:1017.30px;left:1540.3px;transform-origin:0 0;transform:scaleX(1.0869);">1 – 2 of 2</span>
<svg style="left:1663.70px;top:1009.00px;width:30px;height:30px;" viewBox="0 0 24 24"><path fill="#8f8f8f"  d="M18.41 16.59L13.82 12l4.59-4.59L17 6l-6 6 6 6zM6 6h2v12H6z"/></svg>
<svg style="left:1723.80px;top:1009.00px;width:30px;height:30px;" viewBox="0 0 24 24"><path fill="#8f8f8f"  d="M15.41 7.41L14 6l-6 6 6 6 1.41-1.41L10.83 12z"/></svg>
<svg style="left:1784.00px;top:1009.00px;width:30px;height:30px;" viewBox="0 0 24 24"><path fill="#8f8f8f"  d="M10 6L8.59 7.41 13.17 12l-4.58 4.59L10 18l6-6z"/></svg>
<svg style="left:1844.00px;top:1009.00px;width:30px;height:30px;" viewBox="0 0 24 24"><path fill="#8f8f8f"  d="M5.59 7.41L10.18 12l-4.59 4.59L7 18l6-6-6-6zM16 6h2v12h-2z"/></svg>
<div class="g" style="left:1037.9px;top:265.7px;width:143.3px;height:56.3px;"></div>
<div class="y" style="left:1037.9px;top:265.7px;width:143.3px;height:56.3px;"></div>
<div class="go" style="left:1062px;top:234px;width:30px;height:36px;"></div><div class="nl" style="left:1062px;top:234px;width:30px;height:36px;"></div>
<span class="t" id="t59" style="font-size:28px;line-height:28px;height:28px;color:#000;top:239.00px;left:1069.2px;transform-origin:0 0;transform:scaleX(1.0000);">3</span>
<svg style="left:1100.5px;top:307px;width:18px;height:27px" viewBox="0 0 18 27"><path d="M4.500 .7Q6 -.3 7.500 .7L7.700 5Q9.300 4.200 10.600 5.500Q12.200 5 13.500 6.600Q15.600 6.300 16.700 8.500L16.800 14.500L15.500 18L15.200 21.500H6L5.500 18.500L3 15.200L.6 11.800Q.8 10 2.500 10.200L4.500 12.500Z" fill="#fff" stroke="#000" stroke-width="1.100" stroke-linejoin="round"/><path d="M7.700 5.500V10M10.600 6V10.300M13.500 7V10.800" stroke="#000" stroke-width="1" fill="none"/><rect x="5.600" y="21.500" width="9.600" height="5" fill="#ffc933" stroke="#000" stroke-width="1.100"/><rect x="11.400" y="23.200" width="1.800" height="1.800" fill="#000"/></svg>
<div class="g" style="left:1125.3px;top:348.5px;width:245.5px;height:66.2px;"></div>
<div class="y" style="left:1125.3px;top:348.5px;width:245.5px;height:66.2px;"></div>
<svg style="left:1360px;top:380px;width:45px;height:18px" viewBox="0 0 45 18"><circle cx="9.500" cy="8.800" r="5.100" fill="#ffc933"/><path d="M14 8.800h8.600M28 8.800h10.500" stroke="#ffc933" stroke-width="3"/></svg>
<div class="go" style="left:1398.2px;top:369.1px;width:222.1px;height:41.8px;border-radius:10px;"></div><div class="tl" style="left:1398.2px;top:369.1px;width:222.1px;height:41.8px;"></div>
<span class="t" id="t60" style="font-size:28px;line-height:28px;height:28px;color:#000;top:376.70px;left:1405.3px;transform-origin:0 0;transform:scaleX(1.0000);">Server attributes</span>
<div class="go" style="left:1421.3px;top:337px;width:30px;height:36px;"></div><div class="nl" style="left:1421.3px;top:337px;width:30px;height:36px;"></div>
<span class="t" id="t61" style="font-size:28px;line-height:28px;height:28px;color:#000;top:342.00px;left:1428.5px;transform-origin:0 0;transform:scaleX(1.0000);">4</span>
<div class="g" style="left:1708.100px;top:362.800px;width:52px;height:48px;border-radius:50%;"></div><div style="left:1708.100px;top:362.800px;width:52px;height:48px;border:2.700px solid #ffc933;border-radius:50%;"></div>
<div class="go" style="left:1746.25px;top:340.2px;width:30px;height:36px;"></div><div class="nl" style="left:1746.25px;top:340.2px;width:30px;height:36px;"></div>
<span class="t" id="t62" style="font-size:28px;line-height:28px;height:28px;color:#000;top:345.20px;left:1753.45px;transform-origin:0 0;transform:scaleX(1.0000);">5</span>
<svg style="left:1724.8px;top:397.3px;width:18px;height:27px" viewBox="0 0 18 27"><path d="M4.500 .7Q6 -.3 7.500 .7L7.700 5Q9.300 4.200 10.600 5.500Q12.200 5 13.500 6.600Q15.600 6.300 16.700 8.500L16.800 14.500L15.500 18L15.200 21.500H6L5.500 18.500L3 15.200L.6 11.800Q.8 10 2.500 10.200L4.500 12.500Z" fill="#fff" stroke="#000" stroke-width="1.100" stroke-linejoin="round"/><path d="M7.700 5.500V10M10.600 6V10.300M13.500 7V10.800" stroke="#000" stroke-width="1" fill="none"/><rect x="5.600" y="21.500" width="9.600" height="5" fill="#ffc933" stroke="#000" stroke-width="1.100"/><rect x="11.400" y="23.200" width="1.800" height="1.800" fill="#000"/></svg>
<div class="go" style="left:695px;top:377px;width:531px;height:326px;border-radius:8px;"></div>
<div  style="left:695px;top:377px;width:531px;height:326px;border-radius:8px;background:#ffc933;box-shadow:0 14px 19px -9px rgba(0,0,0,.2),0 30px 48px 4px rgba(0,0,0,.14),0 11px 58px 10px rgba(0,0,0,.12);"></div>
<div  style="left:698px;top:380px;width:525px;height:320px;background:#fff;border-radius:5px;overflow:hidden;"><div style="left:0;top:0;width:525px;height:80px;background:#00695c;"></div><div style="left:0;top:0;width:525px;height:320px;border-radius:5px;box-shadow:inset 0 0 5px 2px #ffdc9c;mix-blend-mode:multiply;"></div></div>
<span class="t" id="t63" style="font-size:25px;line-height:25px;height:25px;color:#fff;top:407.04px;-webkit-text-stroke:0.65px #fff;left:718px;transform-origin:0 0;transform:scaleX(1.0489);">Add attribute</span>
<svg style="left:1167.00px;top:404.80px;width:30px;height:30px;" viewBox="0 0 24 24"><path fill="#fff"  d="M19 6.41L17.59 5 12 10.59 6.41 5 5 6.41 10.59 12 5 17.59 6.41 19 12 13.41 17.59 19 19 17.59 13.41 12z"/></svg>
<div class="g" style="left:724.7px;top:492px;width:471.1px;height:55.3px;"></div>
<div class="y" style="left:724.7px;top:492px;width:471.1px;height:55.3px;"></div>
<div  style="left:743px;top:490px;width:39px;height:8px;background:#fff;"></div>
<span class="t" id="t64" style="font-size:13.5px;line-height:13.5px;height:13.5px;color:#6a6a6a;top:488.77px;left:747.5px;transform-origin:0 0;transform:scaleX(0.9919);">Key*</span>
<span class="t" id="t65" style="font-size:20px;line-height:20px;height:20px;color:#212121;top:509.37px;left:743px;transform-origin:0 0;transform:scaleX(0.9333);">temperatureAlarmFlag</span>
<div class="g" style="left:724.7px;top:553px;width:181.1px;height:54.8px;"></div>
<div class="y" style="left:724.7px;top:553px;width:181.1px;height:54.8px;"></div>
<svg style="left:743.00px;top:567.80px;width:23px;height:23px;" viewBox="0 0 24 24"><path fill="#ababab"  d="M19,19H5V5H15V3H5C3.89,3 3,3.89 3,5V19A2,2 0 0,0 5,21H19A2,2 0 0,0 21,19V11H19M7.91,10.08L6.5,11.5L11,16L21,6L19.59,4.58L11,13.17L7.91,10.08Z"/></svg>
<span class="t" id="t66" style="font-size:17.5px;line-height:17.5px;height:17.5px;color:#212121;top:570.19px;left:778.2px;transform-origin:0 0;transform:scaleX(1.0244);">Boolean</span>
<svg style="left:865.10px;top:563.50px;width:32px;height:32px;" viewBox="0 0 24 24"><path fill="#666"  d="M7 10l5 5 5-5z"/></svg>
<div class="g" style="left:908px;top:555.2px;width:140px;height:49.8px;"></div>
<div class="y" style="left:908px;top:555.2px;width:140px;height:49.8px;"></div>
<div  style="left:912.9px;top:560px;width:130.1px;height:40.2px;background:#00645a;border-radius:20.100px;"></div>
<svg style="left:944.30px;top:568.30px;width:24px;height:24px;" viewBox="0 0 24 24"><path fill="#fff"  d="M9 16.17L4.83 12l-1.42 1.41L9 19 21 7l-1.41-1.41z"/></svg>
<span class="t" id="t67" style="font-size:17.5px;line-height:17.5px;height:17.5px;color:#fff;top:570.49px;left:975px;transform-origin:0 0;transform:scaleX(0.9903);">True</span>
<div  style="left:1053px;top:560px;width:130px;height:40.2px;background:#e0e0e0;border-radius:20.100px;"></div>
<span class="t" id="t68" style="font-size:17.5px;line-height:17.5px;height:17.5px;color:#212121;top:570.49px;left:1096.5px;transform-origin:0 0;transform:scaleX(0.9861);">False</span>
<span class="t" id="t69" style="font-size:17.5px;line-height:17.5px;height:17.5px;color:#00695c;top:659.99px;-webkit-text-stroke:0.45px #00695c;left:1054.3px;transform-origin:0 0;transform:scaleX(1.0333);">Cancel</span>
<div class="go" style="left:1130.300px;top:643.800px;width:84.900px;height:49.800px;"></div>
<div  style="left:1130.3px;top:643.8px;width:84.9px;height:49.8px;background:#ffc933;border-radius:8px;"></div>
<div  style="left:1133.3px;top:646.8px;width:78.9px;height:43.8px;background:#00695c;border-radius:5px;"></div>
<span class="t" id="t70" style="font-size:17.5px;line-height:17.5px;height:17.5px;color:#fff;top:659.99px;-webkit-text-stroke:0.45px #fff;left:1156px;transform-origin:0 0;transform:scaleX(1.0276);">Add</span>
<svg style="left:969.8px;top:589.3px;width:18px;height:27px" viewBox="0 0 18 27"><path d="M4.500 .7Q6 -.3 7.500 .7L7.700 5Q9.300 4.200 10.600 5.500Q12.200 5 13.500 6.600Q15.600 6.300 16.700 8.500L16.800 14.500L15.500 18L15.200 21.500H6L5.500 18.500L3 15.200L.6 11.800Q.8 10 2.500 10.200L4.500 12.500Z" fill="#fff" stroke="#000" stroke-width="1.100" stroke-linejoin="round"/><path d="M7.700 5.500V10M10.600 6V10.300M13.500 7V10.800" stroke="#000" stroke-width="1" fill="none"/><rect x="5.600" y="21.500" width="9.600" height="5" fill="#ffc933" stroke="#000" stroke-width="1.100"/><rect x="11.400" y="23.200" width="1.800" height="1.800" fill="#000"/></svg>
<svg style="left:1164.8px;top:677px;width:18px;height:27px" viewBox="0 0 18 27"><path d="M4.500 .7Q6 -.3 7.500 .7L7.700 5Q9.300 4.200 10.600 5.500Q12.200 5 13.500 6.600Q15.600 6.300 16.700 8.500L16.800 14.500L15.500 18L15.200 21.500H6L5.500 18.500L3 15.200L.6 11.800Q.8 10 2.500 10.200L4.500 12.500Z" fill="#fff" stroke="#000" stroke-width="1.100" stroke-linejoin="round"/><path d="M7.700 5.500V10M10.600 6V10.300M13.500 7V10.800" stroke="#000" stroke-width="1" fill="none"/><rect x="5.600" y="21.500" width="9.600" height="5" fill="#ffc933" stroke="#000" stroke-width="1.100"/><rect x="11.400" y="23.200" width="1.800" height="1.800" fill="#000"/></svg>
<svg style="left:1215px;top:525px;width:45px;height:18px" viewBox="0 0 45 18"><circle cx="9.200" cy="9.600" r="5.100" fill="#ffc933"/><path d="M14 9.600h8.500M27.800 9.600h13.500" stroke="#ffc933" stroke-width="3"/></svg>
<div class="go" style="left:1256px;top:515.2px;width:284.8px;height:41.6px;border-radius:10px;"></div><div class="tl" style="left:1256px;top:515.2px;width:284.8px;height:41.6px;"></div>
<span class="t" id="t71" style="font-size:28px;line-height:28px;height:28px;color:#000;top:522.80px;left:1264.9px;transform-origin:0 0;transform:scaleX(1.0000);">Add a server attribute</span>
<div class="go" style="left:1278.2px;top:483px;width:30px;height:36px;"></div><div class="nl" style="left:1278.2px;top:483px;width:30px;height:36px;"></div>
<span class="t" id="t72" style="font-size:28px;line-height:28px;height:28px;color:#000;top:488.00px;left:1285.4px;transform-origin:0 0;transform:scaleX(1.0000);">6</span>
</div></body></html>
